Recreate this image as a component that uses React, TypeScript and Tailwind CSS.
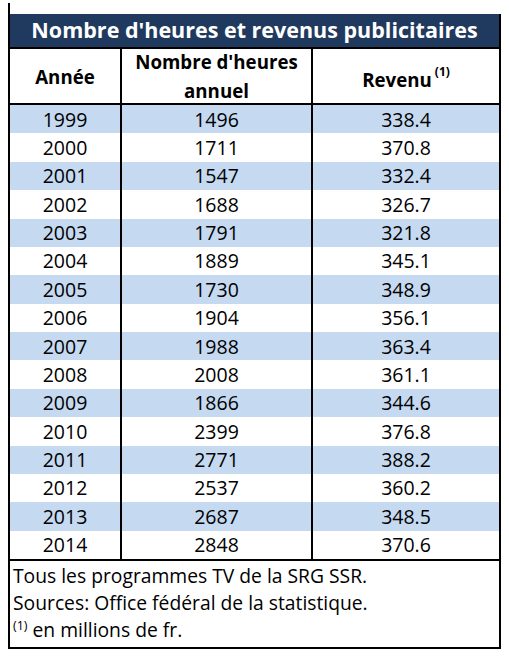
const rows: [string, string, string][] = [
  ["1999", "1496", "338.4"],
  ["2000", "1711", "370.8"],
  ["2001", "1547", "332.4"],
  ["2002", "1688", "326.7"],
  ["2003", "1791", "321.8"],
  ["2004", "1889", "345.1"],
  ["2005", "1730", "348.9"],
  ["2006", "1904", "356.1"],
  ["2007", "1988", "363.4"],
  ["2008", "2008", "361.1"],
  ["2009", "1866", "344.6"],
  ["2010", "2399", "376.8"],
  ["2011", "2771", "388.2"],
  ["2012", "2537", "360.2"],
  ["2013", "2687", "348.5"],
  ["2014", "2848", "370.6"],
];

export default function App() {
  return (
    <div className="min-h-[659px] bg-white pl-[8px] pt-[3px] font-['Open_Sans',sans-serif] text-black">
      <div className="h-[11px] w-[2px] bg-black" />
      <div className="w-[493px] border-x-2 border-b-2 border-black">
        <div className="flex h-[33px] items-center justify-center bg-[#1f3a5e] text-[21.5px] font-bold text-white">
          Nombre d'heures et revenus publicitaires
        </div>
        <div className="flex h-[58px] border-y-2 border-black text-[18.7px] font-bold leading-[29px]">
          <div className="flex w-[112px] items-center justify-center border-r-2 border-black">Année</div>
          <div className="flex w-[191px] items-center justify-center border-r-2 border-black text-center">
            Nombre d'heures
            <br />
            annuel
          </div>
          <div className="flex flex-1 items-center justify-center pt-[6px]">
            Revenu
            <span className="relative -top-[7px] ml-[3px] text-[12px] leading-none">(1)</span>
          </div>
        </div>
        {rows.map((r, i) => (
          <div
            key={r[0]}
            className={`flex h-[28.375px] items-center text-[19.5px] ${i % 2 === 0 ? "bg-[#c5d9f1]" : "bg-white"}`}
          >
            <div className="flex h-full w-[112px] items-center justify-center border-r-2 border-black">{r[0]}</div>
            <div className="flex h-full w-[191px] items-center justify-center border-r-2 border-black">{r[1]}</div>
            <div className="flex h-full flex-1 items-center justify-center">{r[2]}</div>
          </div>
        ))}
        <div className="h-[88px] border-t-2 border-black px-[3px] pt-[1px] text-[19.3px] leading-[27px]">
          <div>Tous les programmes TV de la SRG SSR.</div>
          <div>Sources: Office fédéral de la statistique.</div>
          <div>
            <span className="relative -top-[7px] text-[12.5px] leading-none">(1)</span> en millions de fr.
          </div>
        </div>
      </div>
    </div>
  );
}
